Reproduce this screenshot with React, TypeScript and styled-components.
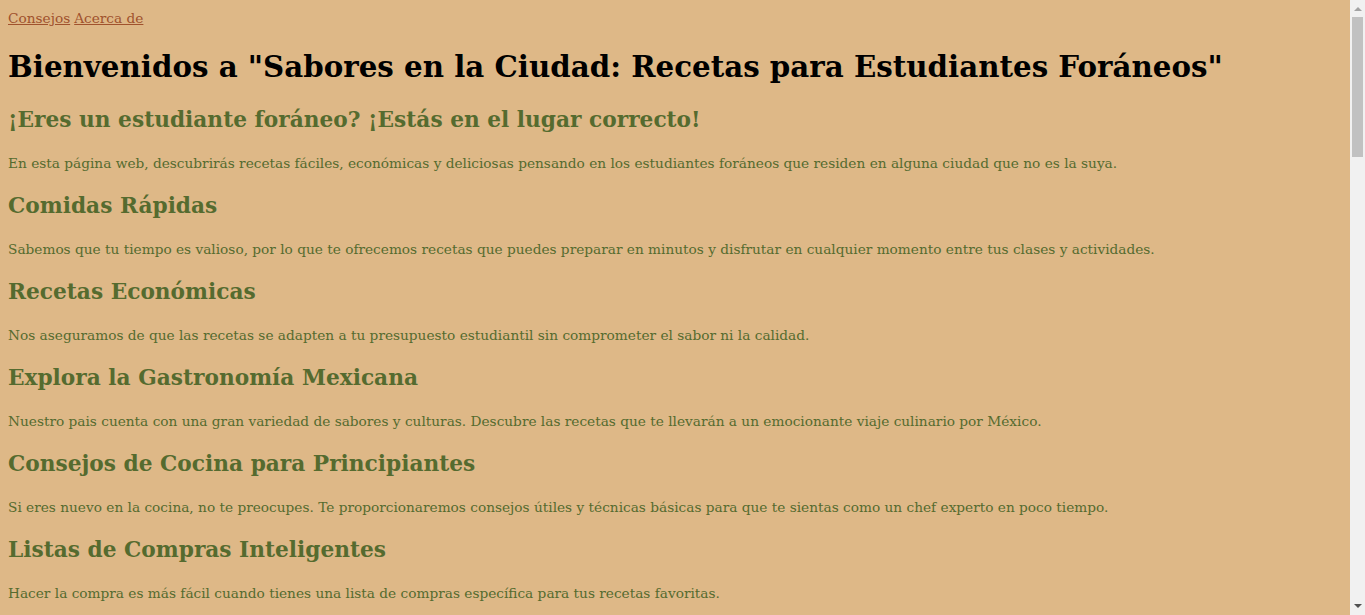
import React from "react";
import styled, { createGlobalStyle } from "styled-components";

const Global = createGlobalStyle`
  html, body { margin: 0; padding: 0; }
  body {
    background: #deb887;
    font-family: "DejaVu Serif", serif;
  }
`;

const Page = styled.div`
  display: flex;
  height: 100vh;
  overflow: hidden;
`;

const Main = styled.main`
  flex: 1;
  min-width: 0;
  padding: 0 8px;
  overflow: hidden;
`;

const Nav = styled.nav`
  display: flex;
  gap: 4px;
  height: 20px;
  margin-top: 8px;
  align-items: center;
`;

const NavLink = styled.a`
  color: #a0522d;
  font-size: 13.7px;
  text-decoration: underline;
`;

const Title = styled.h1`
  color: #000;
  font-size: 29.3px;
  line-height: 36px;
  margin: 21px 0;
  font-weight: bold;
`;

const Section = styled.section``;

const SectionTitle = styled.h2<{ $first?: boolean }>`
  color: #556b2f;
  font-size: 21.7px;
  line-height: 28px;
  margin: ${(p) => (p.$first ? "1px" : "20px")} 0 0;
  font-weight: bold;
`;

const Text = styled.p`
  color: #556b2f;
  font-size: 13.7px;
  line-height: 18px;
  margin: 20px 0 0;
`;

const Scrollbar = styled.div`
  width: 15px;
  flex: none;
  display: flex;
  flex-direction: column;
  background: #f1f1f1;
`;

const ScrollButton = styled.div`
  height: 17px;
  flex: none;
  display: flex;
  align-items: center;
  justify-content: center;
`;

const Track = styled.div`
  flex: 1;
`;

const Thumb = styled.div`
  height: 140px;
  margin: 0 2px;
  background: #c1c1c1;
`;

const sections = [
  ["¡Eres un estudiante foráneo? ¡Estás en el lugar correcto!", "En esta página web, descubrirás recetas fáciles, económicas y deliciosas pensando en los estudiantes foráneos que residen en alguna ciudad que no es la suya."],
  ["Comidas Rápidas", "Sabemos que tu tiempo es valioso, por lo que te ofrecemos recetas que puedes preparar en minutos y disfrutar en cualquier momento entre tus clases y actividades."],
  ["Recetas Económicas", "Nos aseguramos de que las recetas se adapten a tu presupuesto estudiantil sin comprometer el sabor ni la calidad."],
  ["Explora la Gastronomía Mexicana", "Nuestro pais cuenta con una gran variedad de sabores y culturas. Descubre las recetas que te llevarán a un emocionante viaje culinario por México."],
  ["Consejos de Cocina para Principiantes", "Si eres nuevo en la cocina, no te preocupes. Te proporcionaremos consejos útiles y técnicas básicas para que te sientas como un chef experto en poco tiempo."],
  ["Listas de Compras Inteligentes", "Hacer la compra es más fácil cuando tienes una lista de compras específica para tus recetas favoritas."],
];

export default function App() {
  return (
    <>
      <Global />
      <Page>
        <Main>
          <Nav>
            <NavLink href="#">Consejos</NavLink>
            <NavLink href="#">Acerca de</NavLink>
          </Nav>
          <Title>Bienvenidos a "Sabores en la Ciudad: Recetas para Estudiantes Foráneos"</Title>
          {sections.map(([h, p], i) => (
            <Section key={i}>
              <SectionTitle $first={i === 0}>{h}</SectionTitle>
              <Text>{p}</Text>
            </Section>
          ))}
        </Main>
        <Scrollbar>
          <ScrollButton>
            <svg width="8" height="5" viewBox="0 0 8 5">
              <path d="M0 5 L4 1 L8 5 Z" fill="#a3a3a3" />
            </svg>
          </ScrollButton>
          <Track>
            <Thumb />
          </Track>
          <ScrollButton>
            <svg width="8" height="5" viewBox="0 0 8 5">
              <path d="M0 0 L4 4 L8 0 Z" fill="#505050" />
            </svg>
          </ScrollButton>
        </Scrollbar>
      </Page>
    </>
  );
}
